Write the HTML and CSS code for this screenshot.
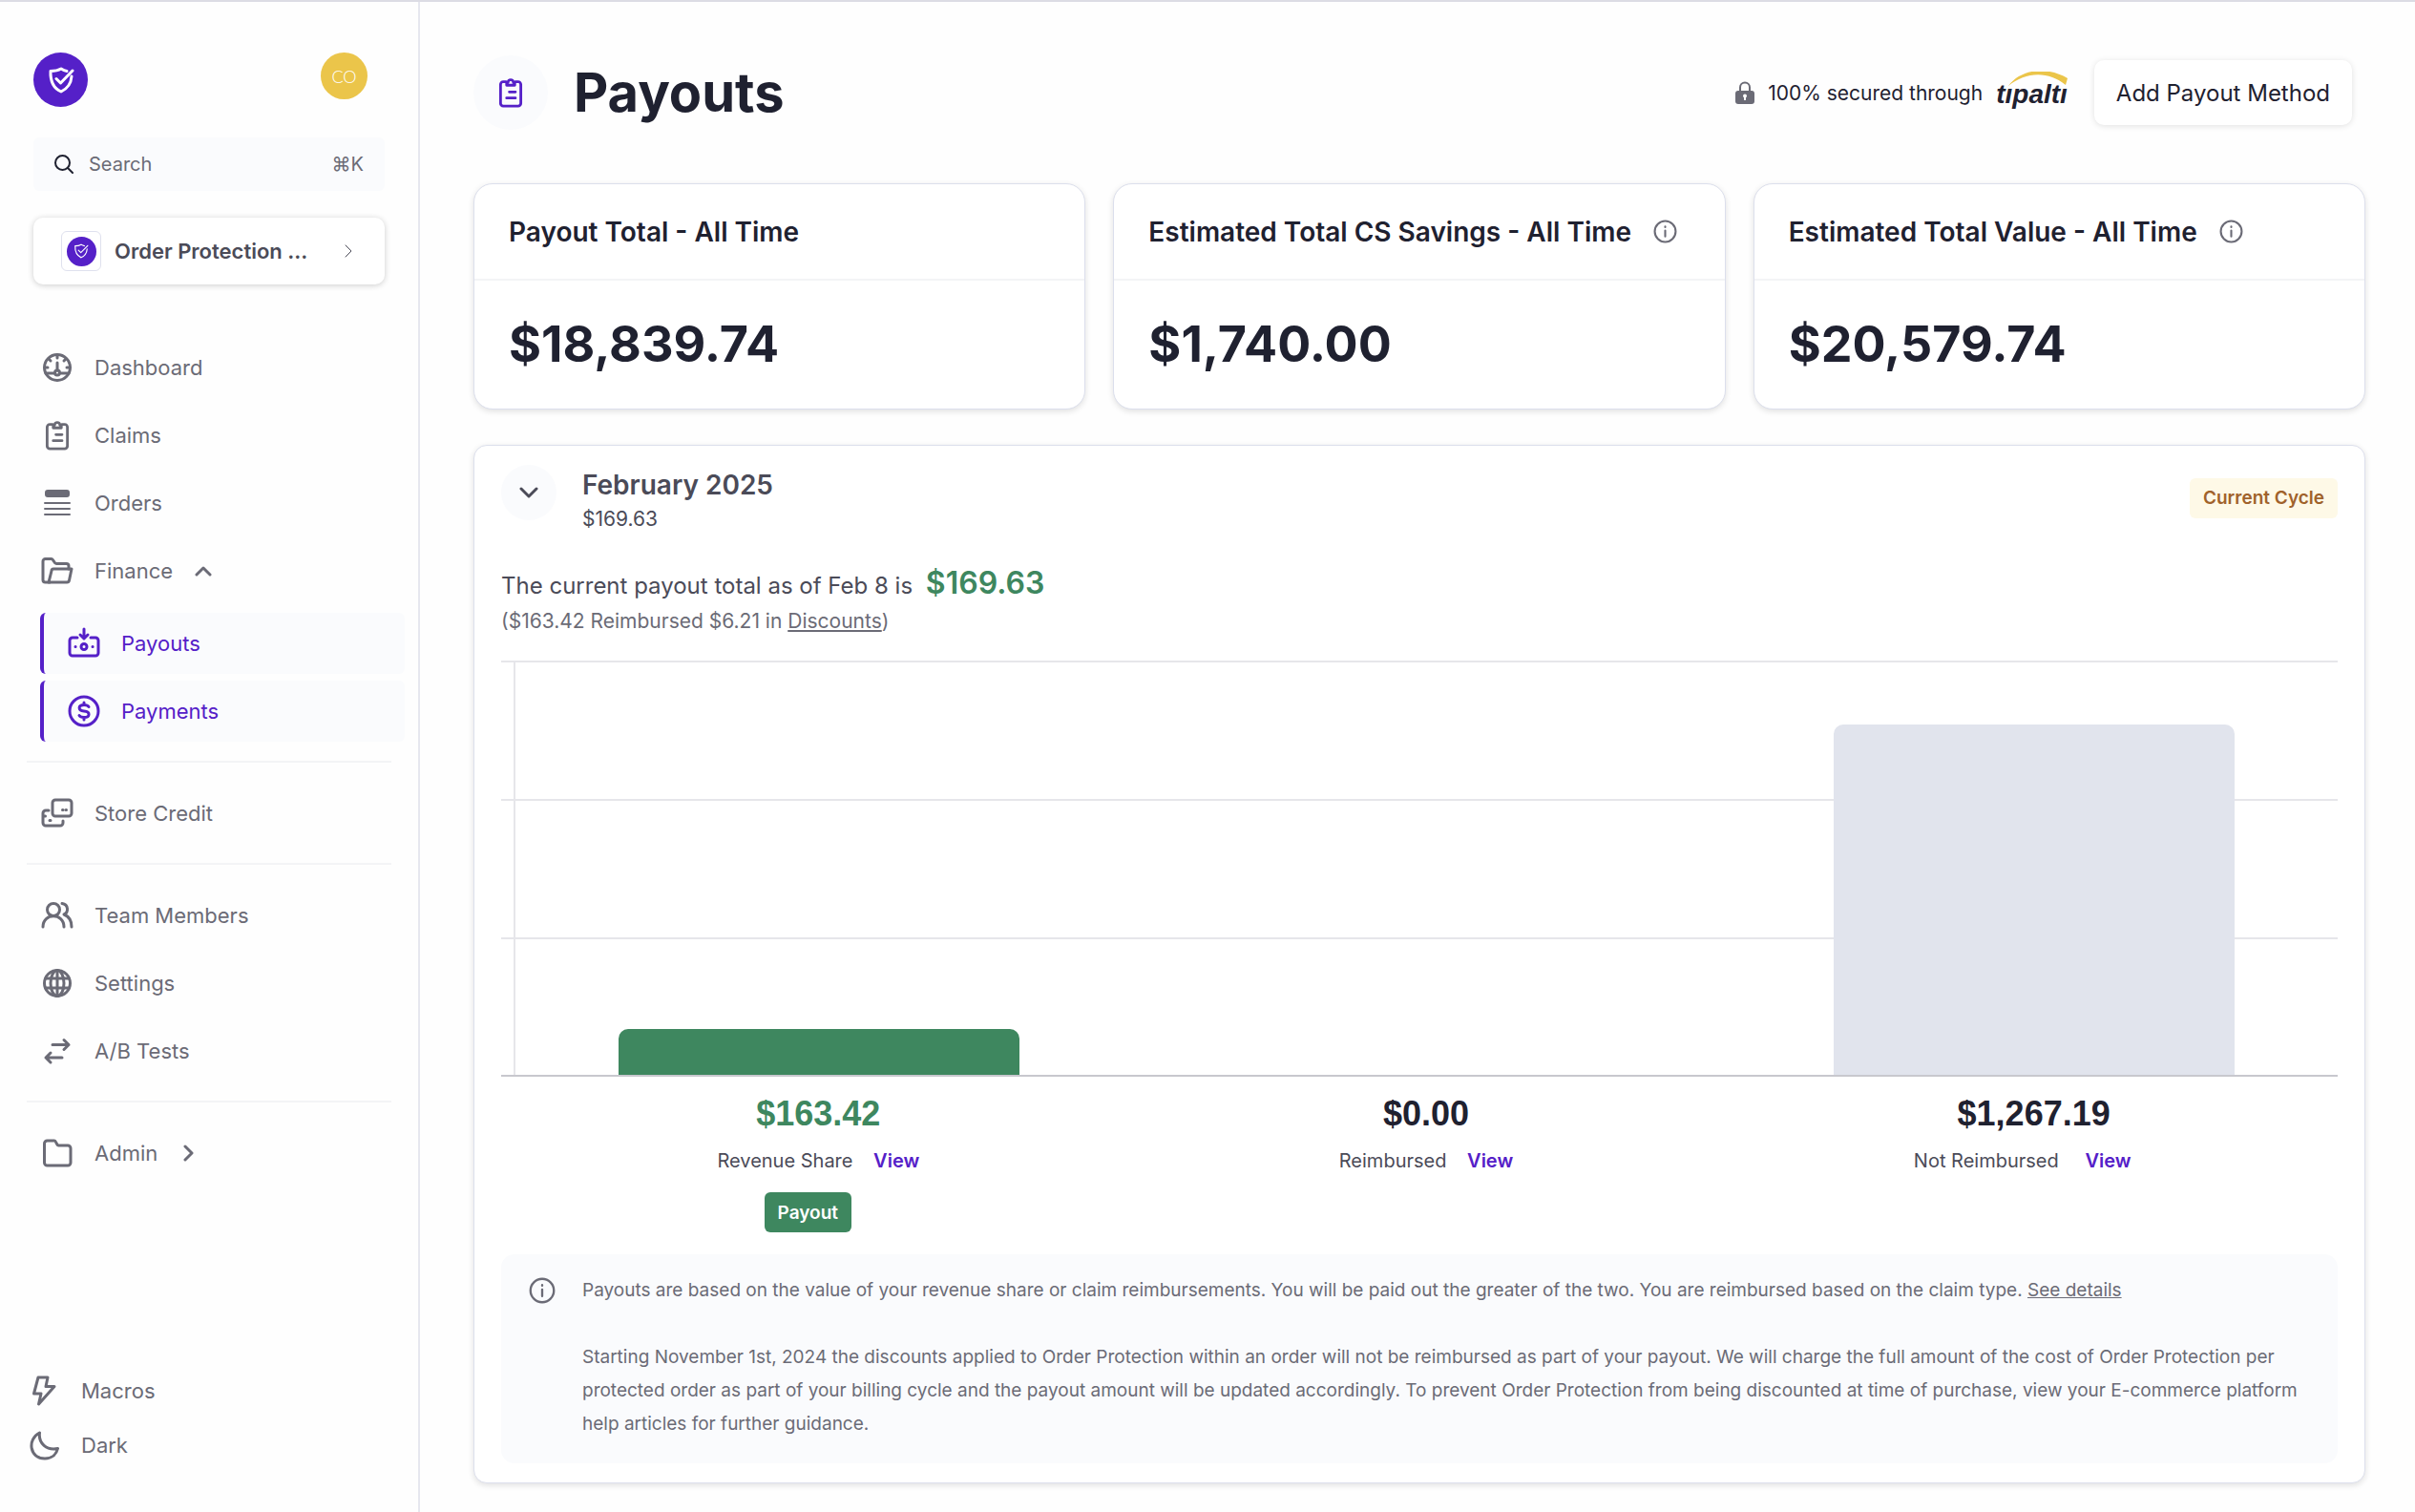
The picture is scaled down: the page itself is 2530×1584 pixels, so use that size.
FILE: index.html
```html
<!DOCTYPE html>
<html lang="en">
<head>
    <meta charset="UTF-8">
    <meta name="viewport" content="width=device-width, initial-scale=1.0">
    <title>Payouts</title>
    <link rel="stylesheet" href="styles.css">
</head>
<body>
    <svg class="defs" width="0" height="0">
        <symbol id="shield" viewBox="0 0 28 28">
            <path d="M20 4.500C17 4 15.500 3 14 2C11.500 3.500 7.500 4.500 3 4.500C2.600 14 5 22 14 26C21.500 22.500 24.500 16.500 25 10" />
            <path d="M9 12.500L13.500 17L26 4" />
        </symbol>
        <symbol id="clipboard" viewBox="0 0 24 24">
            <path d="M8.500 4H6.500A2 2 0 0 0 4.500 6V20A2 2 0 0 0 6.500 22H17.500A2 2 0 0 0 19.500 20V6A2 2 0 0 0 17.500 4H15.500" />
            <path d="M9 6.500V4.500H10A2 2 0 0 1 14 4.500H15V6.500Z" />
            <path d="M11 11.500H15.500M9 16H15.500" />
        </symbol>
        <symbol id="info" viewBox="0 0 24 24">
            <circle cx="12" cy="12" r="10.500" />
            <path d="M12 11V17M12 7V7.600" />
        </symbol>
    </svg>

    <div class="page">
        <aside class="sidebar">
            <div class="brand">
                <a href="#" class="logo" aria-label="Order Protection"><svg><use href="#shield" /></svg></a>
                <button class="avatar">CO</button>
            </div>
            <label class="search">
                <svg viewBox="0 0 20 20"><circle cx="8.500" cy="8.500" r="7.500" /><path d="M14 14L19 19" /></svg>
                <input type="text" placeholder="Search" aria-label="Search">
                <span>⌘K</span>
            </label>
            <button class="org">
                <span class="org-logo"><span class="org-dot"><svg><use href="#shield" /></svg></span></span>
                <span class="org-name">Order Protection ...</span>
                <svg class="org-arrow" viewBox="0 0 8 14"><path d="M1 1L7 7L1 13" /></svg>
            </button>

            <nav class="nav">
                <a href="#" class="nav-item">
                    <svg class="icon" viewBox="0 0 34 34"><circle cx="17" cy="17" r="13.500" /><path d="M5 23H13M21 23H29M17 12V20M17 4V7M4 17H7M27 17H30M8 8L10 10M26 8L24 10" /><circle cx="17" cy="22.500" r="2.500" /></svg>
                    Dashboard
                </a>
                <a href="#" class="nav-item">
                    <svg class="icon clip"><use href="#clipboard" /></svg>
                    Claims
                </a>
                <a href="#" class="nav-item">
                    <svg class="icon thin" viewBox="0 0 34 34"><rect class="solid" x="5" y="4" width="24" height="6" rx="2" /><path d="M4 17H30M4 23H30M4 29H30" /></svg>
                    Orders
                </a>
                <a href="#" class="nav-item">
                    <svg class="icon" viewBox="0 0 34 34"><path d="M9 29H4.500A2.500 2.500 0 0 1 2 26.500V7A2.500 2.500 0 0 1 4.500 4.500H11C13 4.500 13.500 9.500 16 9.500H26.500A2.500 2.500 0 0 1 29 12V15" /><path d="M8 29L11 17A2 2 0 0 1 13 15H32L29.500 27A2.500 2.500 0 0 1 27 29Z" /></svg>
                    Finance
                    <svg class="caret" viewBox="0 0 18 18"><path d="M2 13L9 6L16 13" /></svg>
                </a>
                <div class="subnav">
                    <a href="#" class="sub-item">
                        <svg class="icon" viewBox="0 0 34 34"><path d="M10 11H5A3 3 0 0 0 2 14V27A3 3 0 0 0 5 30H29A3 3 0 0 0 32 27V14A3 3 0 0 0 29 11H24" /><path d="M17 2V11M13 8L17 12L21 8" /><circle cx="17" cy="20.500" r="3" /><path d="M8 20.500H8.100M26 20.500H26.100" /></svg>
                        Payouts
                    </a>
                    <a href="#" class="sub-item">
                        <svg class="icon" viewBox="0 0 34 34"><circle cx="17" cy="17" r="15" /><path d="M22 12.500C21 11 19.500 10.500 17 10.500C10.500 10.500 10.500 16.500 17 17C24 17.500 23.500 23.500 17 23.500C14.500 23.500 13 23 12 21.500M17 8V10.500M17 23.500V26" /></svg>
                        Payments
                    </a>
                </div>
                <hr>
                <a href="#" class="nav-item">
                    <svg class="icon" viewBox="0 0 34 34"><rect x="12" y="3" width="20" height="17" rx="3" /><path d="M22.500 13.500H23M26 13.500H26.500M8 14H5A3 3 0 0 0 2 17V27A3 3 0 0 0 5 30H20A3 3 0 0 0 23 27V25M2 20H4.500M9 24.500H10" /></svg>
                    Store Credit
                </a>
                <hr>
                <a href="#" class="nav-item">
                    <svg class="icon" viewBox="0 0 34 34"><circle cx="13" cy="11" r="6.500" /><path d="M2 29C2 14 24 14 24 29M22 4.500C29 5.500 29 14 24 16C29 18 32 22 32 29" /></svg>
                    Team Members
                </a>
                <a href="#" class="nav-item">
                    <svg class="icon" viewBox="0 0 34 34"><circle cx="17" cy="17" r="13.500" /><ellipse cx="17" cy="17" rx="7" ry="13.500" /><path d="M17 4V30M5 12H29M5 22H29" /></svg>
                    Settings
                </a>
                <a href="#" class="nav-item">
                    <svg class="icon" viewBox="0 0 34 34"><path d="M12 10.500H29M24 5.500L29 10.500L24 15.500M22 24H5M10 19L5 24L10 29" /></svg>
                    A/B Tests
                </a>
                <hr>
                <a href="#" class="nav-item">
                    <svg class="icon" viewBox="0 0 34 34"><path d="M3.500 7A3 3 0 0 1 6.500 4H14C16 4 16 9 18.500 9H28A3 3 0 0 1 31 12V27A3 3 0 0 1 28 30H6.500A3 3 0 0 1 3.500 27Z" /></svg>
                    Admin
                    <svg class="caret" viewBox="0 0 18 18"><path d="M6 2L13 9L6 16" /></svg>
                </a>
            </nav>

            <div class="bottom">
                <a href="#" class="bottom-item">
                    <svg class="icon" viewBox="0 0 34 34"><path d="M11 3H21L19 12.500H28L11.500 31L14 20H6.500Z" /></svg>
                    Macros
                </a>
                <button class="bottom-item">
                    <svg class="icon" viewBox="0 0 34 34"><path d="M12.500 4C-1 11 2 31 18 31C25 31 30 27 31.500 20.500C20 23 11 15 12.500 4Z" /></svg>
                    Dark
                </button>
            </div>
        </aside>

        <main class="main">
            <header class="header">
                <span class="header-icon"><svg><use href="#clipboard" /></svg></span>
                <h1>Payouts</h1>
                <div class="secured">
                    <svg class="lock" viewBox="0 0 20 24"><path class="shackle" d="M5 11V6.500A5 5 0 0 1 15 6.500V11" /><rect x="0" y="10" width="20" height="14" rx="3" /><circle class="hole" cx="10" cy="15.500" r="2" /><path class="hole" d="M9 16H11V20H9Z" /></svg>
                    <span>100% secured through</span>
                    <span class="tipalti">
                        tıpaltı
                        <svg viewBox="0 0 62 16"><path d="M0 15C14 -4 42 -5 62 7L60 14C42 -1 18 0 0 15Z" /></svg>
                    </span>
                </div>
                <button class="add">Add Payout Method</button>
            </header>

            <section class="cards">
                <article class="card">
                    <h2>Payout Total - All Time</h2>
                    <p>$18,839.74</p>
                </article>
                <article class="card">
                    <h2>Estimated Total CS Savings - All Time <svg class="info"><use href="#info" /></svg></h2>
                    <p>$1,740.00</p>
                </article>
                <article class="card">
                    <h2>Estimated Total Value - All Time <svg class="info"><use href="#info" /></svg></h2>
                    <p>$20,579.74</p>
                </article>
            </section>

            <section class="panel">
                <div class="panel-head">
                    <button class="toggle" aria-label="Collapse"><svg viewBox="0 0 20 12"><path d="M2 2L10 10L18 2" /></svg></button>
                    <div class="month">
                        <h2>February 2025</h2>
                        <p>$169.63</p>
                    </div>
                    <span class="badge">Current Cycle</span>
                </div>
                <p class="total">The current payout total as of Feb 8 is <strong>$169.63</strong></p>
                <p class="split">($163.42 Reimbursed $6.21 in <a href="#">Discounts</a>)</p>

                <div class="chart">
                    <div class="plot">
                        <div class="column"><div class="bar green" style="height: 11%"></div></div>
                        <div class="column"></div>
                        <div class="column"><div class="bar" style="height: 84.500%"></div></div>
                    </div>
                </div>
                <div class="legend">
                    <div class="entry">
                        <strong class="amount green-text">$163.42</strong>
                        <p>Revenue Share <a href="#">View</a></p>
                        <button class="payout">Payout</button>
                    </div>
                    <div class="entry">
                        <strong class="amount">$0.00</strong>
                        <p>Reimbursed <a href="#">View</a></p>
                    </div>
                    <div class="entry">
                        <strong class="amount">$1,267.19</strong>
                        <p class="long">Not Reimbursed <a href="#">View</a></p>
                    </div>
                </div>

                <div class="note">
                    <svg class="note-icon"><use href="#info" /></svg>
                    <div>
                        <p>Payouts are based on the value of your revenue share or claim reimbursements. You will be paid out the greater of the two. You are reimbursed based on the claim type. <a href="#">See details</a></p>
                        <p>Starting November 1st, 2024 the discounts applied to Order Protection within an order will not be reimbursed as part of your payout. We will charge the full amount of the cost of Order Protection per protected order as part of your billing cycle and the payout amount will be updated accordingly. To prevent Order Protection from being discounted at time of purchase, view your E-commerce platform help articles for further guidance.</p>
                    </div>
                </div>
            </section>
        </main>
    </div>
</body>
</html>
```
FILE: styles.css
```css
* {
    box-sizing: border-box;
}

body {
    margin: 0;
    font-family: Inter, "Liberation Sans", sans-serif;
    font-size: 22px;
    color: #6b6b76;
    background-color: #fefefe;
}

h1, h2, p {
    margin: 0;
}

a {
    color: inherit;
}

button, input {
    font: inherit;
    color: inherit;
    border: none;
    background: none;
    padding: 0;
}

button {
    cursor: pointer;
}

svg {
    fill: none;
    stroke: currentColor;
    stroke-width: 2;
    stroke-linecap: round;
    stroke-linejoin: round;
    flex: none;
}

.defs {
    display: none;
}

.page {
    display: flex;
    min-height: 100vh;
    border-top: 2px solid #dcdce4;
}

/* sidebar */

.sidebar {
    width: 440px;
    flex: none;
    display: flex;
    flex-direction: column;
    padding: 53px 0 42px;
    border-right: 2px solid #e6e7ef;
}

.brand {
    display: flex;
    justify-content: space-between;
    margin: 0 53px 32px 35px;
}

.logo, .org-dot {
    display: flex;
    align-items: center;
    justify-content: center;
    border-radius: 50%;
    background-color: #5520c8;
    color: #fff;
}

.logo {
    width: 57px;
    height: 57px;
}

.logo svg {
    width: 28px;
    height: 28px;
    stroke-width: 3;
}

.avatar {
    width: 49px;
    height: 49px;
    border-radius: 50%;
    background-color: #ebc54a;
    color: #fff;
    font-family: Lato, sans-serif;
    font-size: 18px;
    font-weight: 300;
}

.search {
    display: flex;
    align-items: center;
    height: 56px;
    margin: 0 35px 28px;
    padding: 0 22px;
    border-radius: 6px;
    background-color: #fafbfd;
    font-size: 20px;
}

.search svg {
    width: 20px;
    height: 20px;
    color: #1f2130;
}

.search input {
    flex: 1;
    min-width: 0;
    margin-left: 16px;
    outline: none;
}

.search input::placeholder {
    color: #6b6b76;
    opacity: 1;
}

.org {
    display: flex;
    align-items: center;
    height: 70px;
    margin: 0 35px 51px;
    padding: 0 34px 0 29px;
    border-radius: 10px;
    background-color: #fff;
    box-shadow: 0 1px 6px rgba(0, 0, 0, 0.2);
    color: #4b4b58;
}

.org-logo {
    display: flex;
    align-items: center;
    justify-content: center;
    width: 42px;
    height: 42px;
    border: 1px solid #dfe1ee;
    border-radius: 6px;
}

.org-dot {
    width: 31px;
    height: 31px;
}

.org-dot svg {
    width: 16px;
    height: 16px;
}

.org-name {
    flex: 1;
    margin-left: 14px;
    text-align: left;
    font-weight: 600;
    white-space: nowrap;
}

.org-arrow {
    width: 8px;
    height: 14px;
    stroke-width: 1;
}

.nav-item, .sub-item, .bottom-item {
    display: flex;
    align-items: center;
    text-decoration: none;
}

.nav-item {
    height: 71px;
    padding-left: 43px;
}

.icon {
    width: 34px;
    height: 34px;
    margin-right: 22px;
    stroke-width: 3;
}

.icon.clip, .icon.thin {
    stroke-width: 2;
}

.solid {
    fill: currentColor;
}

.caret {
    width: 18px;
    height: 18px;
    margin-left: 23px;
    stroke-width: 3;
}

.subnav {
    display: flex;
    flex-direction: column;
    gap: 7px;
    margin: 9px 14px 20px 42px;
}

.sub-item {
    height: 64px;
    padding-left: 25px;
    border-left: 4px solid #5520c8;
    border-radius: 6px;
    background-color: #fafbfd;
    color: #5520c8;
}

.nav hr {
    height: 2px;
    margin: 0 28px 17px;
    border: none;
    background-color: #f3f4f6;
}

.nav-item + hr {
    margin-top: 17px;
}

.bottom {
    margin-top: auto;
}

.bottom-item {
    height: 57px;
    padding-left: 29px;
}

/* content */

.main {
    flex: 1;
    min-width: 0;
    padding: 56px 52px 28px 56px;
    color: #4b4b58;
}

.header {
    display: flex;
    align-items: center;
    height: 78px;
    margin: 0 14px 56px 0;
    color: #1f2130;
}

.header-icon {
    display: flex;
    align-items: center;
    justify-content: center;
    width: 78px;
    height: 78px;
    border-radius: 50%;
    background-color: #fafbfd;
    color: #5520c8;
}

.header-icon svg {
    width: 34px;
    height: 34px;
}

h1 {
    margin-left: 27px;
    font-size: 56px;
    font-weight: 700;
}

.secured {
    display: flex;
    align-items: center;
    margin-left: auto;
    font-size: 21px;
}

.lock {
    width: 20px;
    height: 24px;
    margin-right: 14px;
    fill: #6b6b76;
    stroke: none;
}

.lock .shackle {
    fill: none;
    stroke: #6b6b76;
}

.lock .hole {
    fill: #fff;
}

.tipalti {
    position: relative;
    margin: 0 28px 0 14px;
    font-family: "Liberation Sans", sans-serif;
    font-size: 28px;
    font-style: italic;
    font-weight: 700;
    line-height: 40px;
    padding-top: 4px;
}

.tipalti svg {
    position: absolute;
    top: 0;
    right: 0;
    width: 62px;
    height: 16px;
    fill: #ebc54a;
    stroke: none;
}

.add {
    height: 68px;
    padding: 0 23px;
    border-radius: 10px;
    background-color: #fff;
    box-shadow: 0 1px 6px rgba(0, 0, 0, 0.12);
    font-size: 24px;
}

.cards {
    display: grid;
    grid-template-columns: repeat(3, 1fr);
    gap: 29px;
    margin-bottom: 37px;
}

.card, .panel {
    border: 1px solid #dcdfec;
    background-color: #fff;
    box-shadow: 0 2px 6px rgba(0, 0, 0, 0.12);
}

.card {
    border-radius: 20px;
    color: #1f2130;
}

.card h2 {
    display: flex;
    align-items: center;
    height: 101px;
    padding: 0 36px;
    border-bottom: 2px solid #f3f4f6;
    font-size: 28px;
    font-weight: 600;
}

.card p {
    padding: 34px 36px;
    font-size: 52px;
    line-height: 66px;
    font-weight: 700;
}

.info {
    width: 25px;
    height: 25px;
    margin-left: 23px;
    color: #6b6b76;
}

.panel {
    padding: 20px 28px 20px;
    border-radius: 14px;
}

.panel-head {
    display: flex;
    height: 100px;
}

.toggle {
    display: flex;
    align-items: center;
    justify-content: center;
    width: 58px;
    height: 58px;
    border-radius: 50%;
    background-color: #fafbfd;
}

.toggle svg {
    width: 20px;
    height: 12px;
    stroke-width: 3;
}

.month {
    margin-left: 27px;
    line-height: 35px;
}

.month h2 {
    margin-top: 4px;
    font-size: 28px;
    font-weight: 600;
}

.month p {
    font-size: 21px;
}

.badge {
    margin: 14px 0 0 auto;
    padding: 0 14px;
    height: 42px;
    line-height: 42px;
    border-radius: 6px;
    background-color: #fef9e7;
    color: #a0622b;
    font-size: 19px;
    font-weight: 600;
}

.total {
    font-size: 24px;
    line-height: 47px;
}

.total strong {
    margin-left: 7px;
    font-size: 32px;
    font-weight: 600;
    color: #3e875f;
}

.split {
    font-size: 21px;
    line-height: 28px;
    color: #6b6b76;
}

.chart {
    display: flex;
    margin-top: 27px;
    padding-left: 13px;
    border-bottom: 2px solid #c8c8ce;
    background-image: repeating-linear-gradient(#e6e6ea 0 2px, transparent 2px 145px);
}

.plot {
    display: grid;
    grid-template-columns: repeat(3, 1fr);
    flex: 1;
    height: 434px;
    border-left: 2px solid #e6e6ea;
}

.column {
    display: flex;
    align-items: flex-end;
    justify-content: center;
    height: 434px;
}

.bar {
    width: 66%;
    border-radius: 10px 10px 0 0;
    background-color: #e1e4ed;
}

.bar.green {
    background-color: #3e875f;
}

.legend {
    display: grid;
    grid-template-columns: repeat(3, 1fr);
    height: 186px;
    padding: 16px 0 0 14px;
    text-align: center;
}

.amount {
    display: block;
    font-family: "Liberation Sans", sans-serif;
    font-size: 36px;
    line-height: 46px;
    color: #1f2130;
}

.amount.green-text {
    color: #3e875f;
}

.entry p {
    margin-top: 8px;
    font-size: 20px;
    line-height: 36px;
}

.entry a {
    margin-left: 16px;
    color: #5520c8;
    font-weight: 600;
    text-decoration: none;
}

.entry .long {
    padding-right: 24px;
}

.entry .long a {
    margin-left: 22px;
}

.payout {
    height: 42px;
    margin: 15px 22px 0 0;
    padding: 0 14px;
    border-radius: 6px;
    background-color: #3e875f;
    color: #fff;
    font-size: 19px;
    font-weight: 600;
}

.note {
    display: flex;
    padding: 20px 24px 24px 29px;
    border-radius: 14px;
    background-color: #fafbfd;
    color: #6b6b76;
    font-size: 19px;
    line-height: 35px;
}

.note p + p {
    margin-top: 35px;
}

.note-icon {
    width: 28px;
    height: 28px;
    margin: 4px 28px 0 0;
}
```
